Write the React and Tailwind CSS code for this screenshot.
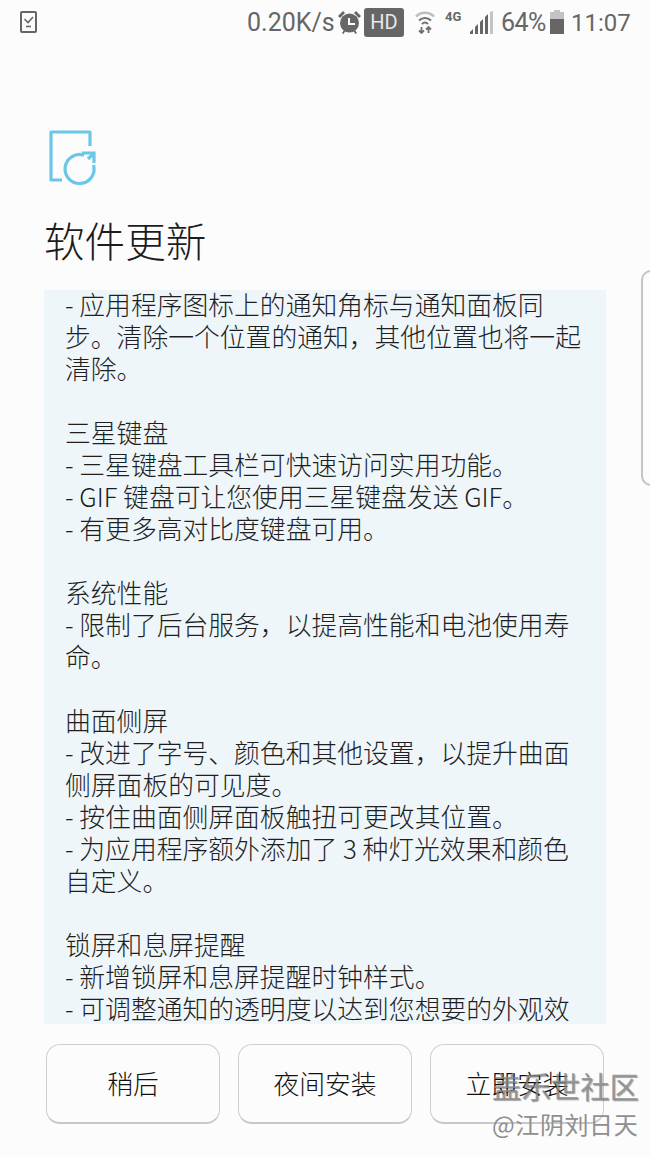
// App.jsx
const cjk = "font-['Noto_Sans_CJK_SC','Noto_Sans',sans-serif]";

const lines = [
  "- 应用程序图标上的通知角标与通知面板同",
  "步。清除一个位置的通知，其他位置也将一起",
  "清除。",
  "",
  "三星键盘",
  "- 三星键盘工具栏可快速访问实用功能。",
  "- GIF 键盘可让您使用三星键盘发送 GIF。",
  "- 有更多高对比度键盘可用。",
  "",
  "系统性能",
  "- 限制了后台服务，以提高性能和电池使用寿",
  "命。",
  "",
  "曲面侧屏",
  "- 改进了字号、颜色和其他设置，以提升曲面",
  "侧屏面板的可见度。",
  "- 按住曲面侧屏面板触扭可更改其位置。",
  "- 为应用程序额外添加了 3 种灯光效果和颜色",
  "自定义。",
  "",
  "锁屏和息屏提醒",
  "- 新增锁屏和息屏提醒时钟样式。",
  "- 可调整通知的透明度以达到您想要的外观效",
];

function StatusBar() {
  return (
    <div className="h-[44px] flex items-center pl-[20px] text-[#666666] font-['Roboto',sans-serif] text-[25px] whitespace-nowrap">
      <svg className="shrink-0" width="17" height="22" viewBox="0 0 17 22" fill="none" stroke="#666666">
        <rect x="1" y="1" width="15" height="20" rx="1" strokeWidth="2" />
        <path d="M4.500 8l3.500 3.500L13 6" strokeWidth="1.600" />
        <path d="M6 15.500h5" strokeWidth="1.600" />
      </svg>
      <span className="ml-[210px] w-[87px] shrink-0 pt-[1px]">0.20K/s</span>
      <svg className="ml-[4px] shrink-0" width="23" height="24" viewBox="0 0 23 24" fill="#666666">
        <circle cx="11.500" cy="13" r="9.500" />
        <path d="M0 6l5-5 2 2-5 5zM23 6l-5-5-2 2 5 5z" />
        <path d="M4 23l2-3 1.500 1-2 3zM19 23l-2-3-1.500 1 2 3z" />
        <path d="M11 8v6h6" fill="none" stroke="#ffffff" strokeWidth="2" />
      </svg>
      <div className="ml-[3px] w-[40px] h-[29px] shrink-0 rounded-[3px] bg-[#666666] text-[#e8e8e8] text-[20px] flex items-center justify-center">HD</div>
      <svg className="ml-[11px] shrink-0" width="20" height="24" viewBox="0 0 20 24" fill="none" stroke="#707070" strokeWidth="2">
        <path d="M1 6.500c5-5 13-5 18 0" stroke="#bdbdbd" strokeWidth="2.400" />
        <path d="M4 10.500c3.500-3.500 8.500-3.500 12 0" />
        <path d="M7 14c2-2 4-2 6 0" />
        <path d="M6.500 17v6M4 20.500l2.500 2.500 2.500-2.500M13.500 23v-6M11 19.500l2.500-2.500 2.500 2.500" strokeWidth="1.800" />
      </svg>
      <span className="ml-[10px] w-[18px] shrink-0 mb-[10px] text-[13px] font-bold">4G</span>
      <svg className="ml-[7px] shrink-0" width="23" height="23" viewBox="0 0 23 23" fill="#666666">
        <path d="M0 23v-2l3-3v5z" />
        <path d="M5 23v-7l3-3v10z" />
        <path d="M10 23V11l3-3v15z" />
        <path d="M15 23V6l3-3v20z" />
        <path d="M20 23V1l3-1v23z" fill="#c4c4c4" />
      </svg>
      <span className="ml-[8px] w-[43px] shrink-0 pt-[1px] tracking-[-0.5px]">64%</span>
      <svg className="ml-[6px] shrink-0" width="14" height="24" viewBox="0 0 14 24">
        <path d="M4 0h6v2h4v22H0V2h4z" fill="#c4c4c4" />
        <rect x="0" y="9" width="14" height="15" fill="#666666" />
      </svg>
      <span className="ml-[7px] shrink-0 pt-[1px] text-[24px]">11:07</span>
    </div>
  );
}

function Button({ children }) {
  return (
    <button className="w-[174px] h-[80px] rounded-[14px] border border-[#cfcfcf] border-b-2 border-b-[#c8c8c8] bg-[#fcfcfc] text-[#111111] text-[25.8px] font-light">
      {children}
    </button>
  );
}

export default function App() {
  return (
    <div className={`relative w-[650px] h-[1156px] overflow-hidden bg-[#fcfcfc] ${cjk}`}>
      <StatusBar />

      <div className="pl-[49px] pt-[86px]">
        <svg width="50" height="56" viewBox="0 0 50 56" fill="none" stroke="#6cc6e8" strokeWidth="3.200" className="block">
          <path d="M13 50H2V2h39v14" strokeLinejoin="round" />
          <path d="M35 25.200A14.500 14.500 0 1 0 44.500 35" />
          <path d="M33 23h12v10" />
          <path d="M44 24l-5 5" />
        </svg>
      </div>

      <h1 className="pl-[44px] mt-[24px] text-[#1c1c1c] text-[40.6px] font-light leading-[60px]">软件更新</h1>

      <div className="ml-[44px] mt-[20px] w-[562px] h-[734px] overflow-hidden bg-[#eef6fa] pl-[21px] text-[#1f1f1f] text-[25.8px] font-light leading-[32px] whitespace-nowrap">
        <div className="-mt-[2px]">
          {lines.map((l, i) => (
            <div key={i} className="h-[32px]">{l}</div>
          ))}
        </div>
      </div>

      <div className="flex gap-[18px] pl-[46px] mt-[20px]">
        <Button>稍后</Button>
        <Button>夜间安装</Button>
        <Button>立即安装</Button>
      </div>

      {/* 右侧面板把手 */}
      <div className="absolute left-[641px] top-[270px] w-[20px] h-[216px] rounded-[12px] border-2 border-[#c4c4c4]" />

      {/* 水印 */}
      <div className="absolute left-[492px] top-[1067px] text-[29.4px] leading-[36px] text-[#8a8a8a]/80 [text-shadow:1px_1px_1px_rgba(0,0,0,0.35)]">盖乐世社区</div>
      <div className="absolute left-[492px] top-[1109px] text-[24px] leading-[30px] text-[#8f8f8f] tracking-[0.6px]">@江阴刘日天</div>
    </div>
  );
}
